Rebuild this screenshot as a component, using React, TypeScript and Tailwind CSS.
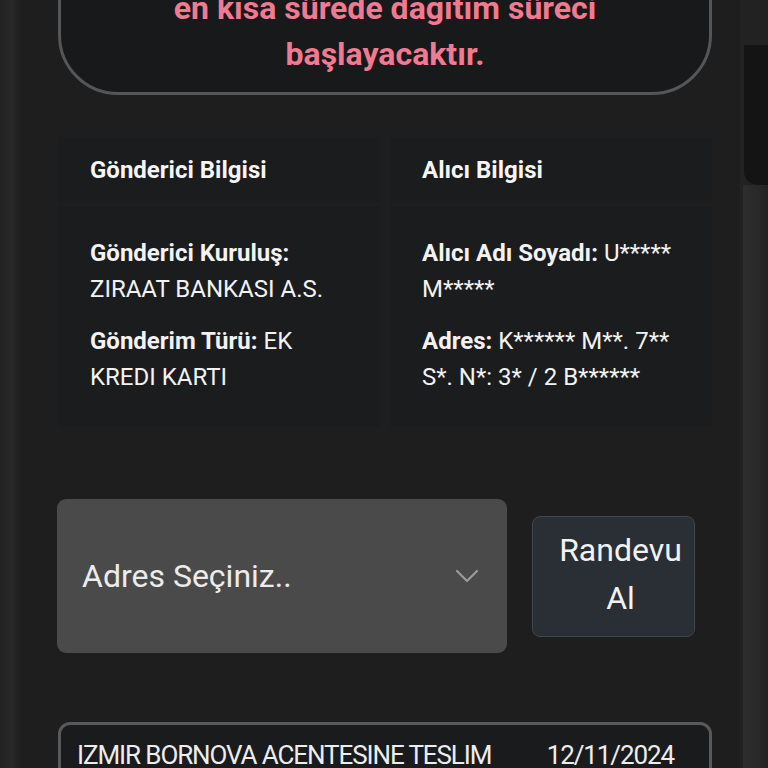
import React from "react";

const font = { fontFamily: "Roboto, 'Noto Sans', sans-serif" };

function InfoCell({ children, head }: { children: React.ReactNode; head?: boolean }) {
  return (
    <div className={head ? "bg-[#1b1c1e] h-[66px] flex items-center px-[32px]" : "bg-[#1b1c1e] h-[221px] px-[32px] pt-[29px]"}>
      {children}
    </div>
  );
}

function Line({ label, value }: { label: string; value: string }) {
  return (
    <p className="text-[24px] leading-[36px] text-[#f2f2f2]">
      <span className="font-bold">{label}</span> {value}
    </p>
  );
}

export default function App() {
  return (
    <div className="w-[768px] h-[768px] overflow-hidden bg-[#1e1e1f] flex" style={font}>
      {/* sol kenar */}
      <div className="w-[24px] shrink-0 bg-gradient-to-r from-[#232323] via-[#282828] to-[#1c1c1c]" />

      <div className="flex-1 pl-[34px] pr-[28px]">
        {/* bilgi kutusu */}
        <div className="mt-[-70px] h-[165px] rounded-[60px] border-[3px] border-[#555657] bg-[#18191b] flex flex-col items-center justify-end pb-[15px]">
          <p className="text-[32px] font-bold leading-[46px] text-[#f27a90] text-center">en kısa sürede dağıtım süreci</p>
          <p className="text-[32px] font-bold leading-[46px] text-[#f27a90] text-center">başlayacaktır.</p>
        </div>

        {/* gönderici / alıcı tablosu */}
        <div className="mt-[42px] grid grid-cols-2 gap-x-[10px] gap-y-[3px]">
          <InfoCell head>
            <span className="text-[24px] font-bold text-[#f5f5f5]">Gönderici Bilgisi</span>
          </InfoCell>
          <InfoCell head>
            <span className="text-[24px] font-bold text-[#f5f5f5]">Alıcı Bilgisi</span>
          </InfoCell>
          <InfoCell>
            <div className="flex flex-col gap-[16px]">
              <Line label="Gönderici Kuruluş:" value="ZIRAAT BANKASI A.S." />
              <Line label="Gönderim Türü:" value="EK KREDI KARTI" />
            </div>
          </InfoCell>
          <InfoCell>
            <div className="flex flex-col gap-[16px]">
              <Line label="Alıcı Adı Soyadı:" value="U***** M*****" />
              <Line label="Adres:" value="K****** M**. 7** S*. N*: 3* / 2 B******" />
            </div>
          </InfoCell>
        </div>

        {/* adres seçimi */}
        <div className="mt-[72px] flex items-center">
          <div className="w-[450px] h-[154px] ml-[-1px] rounded-[9px] bg-[#4a4a4a] flex items-center justify-between pl-[25px] pr-[28px]">
            <span className="text-[32px] text-[#ececec]">Adres Seçiniz..</span>
            <svg width="24" height="14" viewBox="0 0 24 14" fill="none">
              <path d="M2 2l10 10L22 2" stroke="#9a9a9a" strokeWidth="2.2" strokeLinecap="round" strokeLinejoin="round" />
            </svg>
          </div>
          <button className="ml-[25px] w-[163px] h-[121px] rounded-[8px] bg-[#2a2f36] border border-[#3f4650] text-[32px] leading-[48px] text-[#f2f2f2] pl-[18px] pr-[4px] pb-[4px]">
            Randevu Al
          </button>
        </div>

        {/* hareket listesi */}
        <div className="mt-[69px] h-[120px] rounded-[12px] border-[3px] border-[#58595a] bg-[#1a1b1d] px-[16px] pt-[11px]">
          <div className="flex justify-between text-[26px] text-[#ededed] tracking-[-1.1px]">
            <span>IZMIR BORNOVA ACENTESINE TESLIM</span>
            <span className="mr-[19px]">12/11/2024</span>
          </div>
        </div>
      </div>

      {/* kaydırma çubuğu */}
      <div className="w-[28px] shrink-0 bg-[#222223] flex flex-col">
        <div className="mt-[45px] ml-[4px] h-[140px] rounded-bl-[14px] bg-[#141414]" />
        <div className="flex-1 ml-[3px] bg-gradient-to-r from-[#2e2e2e] to-[#242424]" />
      </div>
    </div>
  );
}
